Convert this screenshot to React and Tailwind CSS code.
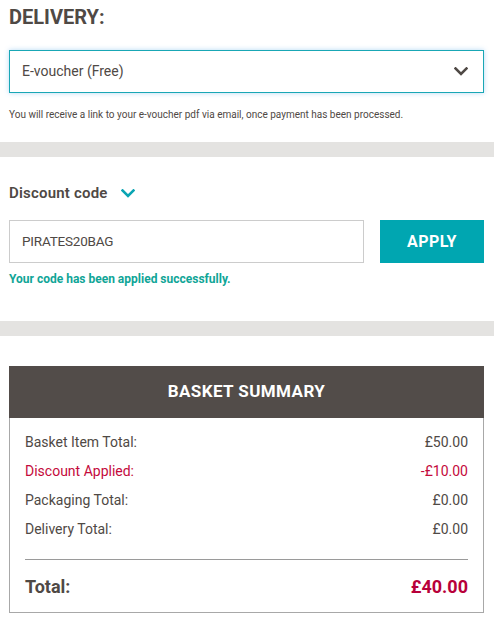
import React from "react";

const Chevron = ({ className, color }) => (
  <svg viewBox="0 0 14 9" className={className} fill="none">
    <polyline points="1.5,1.5 7,7 12.5,1.5" stroke={color} strokeWidth="2.6" strokeLinecap="square" />
  </svg>
);

const rows = [
  { label: "Basket Item Total:", value: "£50.00" },
  { label: "Discount Applied:", value: "-£10.00", red: true },
  { label: "Packaging Total:", value: "£0.00" },
  { label: "Delivery Total:", value: "£0.00" },
];

export default function App() {
  return (
    <div className="w-[494px] h-[621px] bg-white text-[#4f4945] font-['Roboto',sans-serif] overflow-hidden">
      {/* delivery */}
      <div className="h-[142px] pt-[5px] px-[9px]">
        <h2 className="text-[20px] leading-[24px] font-bold">DELIVERY:</h2>
        <div className="mt-[21px] h-[43px] w-[475px] border border-[#19a7b5] shadow-[0_0_5px_rgba(90,170,230,0.45)] flex items-center justify-between pl-[12px] pr-[15px]">
          <span className="text-[14px]">E-voucher (Free)</span>
          <Chevron className="w-[14px] h-[9px]" color="#4f4945" />
        </div>
        <p className="mt-[16px] text-[10px] leading-[12px]">
          You will receive a link to your e-voucher pdf via email, once payment has been processed.
        </p>
      </div>

      <div className="h-[15px] bg-[#e4e3e1]" />

      {/* discount */}
      <div className="h-[164px] pt-[26px] px-[9px]">
        <div className="flex items-center gap-[13px] h-[20px]">
          <span className="text-[15px] leading-[20px] font-semibold tracking-[0.2px]">Discount code</span>
          <Chevron className="w-[14px] h-[9px]" color="#0aa5b3" />
        </div>
        <div className="mt-[17px] flex gap-[16px] h-[43px]">
          <div className="w-[355px] border border-[#cccccc] flex items-center pl-[12px] text-[13.5px] tracking-[-0.2px]">
            PIRATES20BAG
          </div>
          <button className="w-[104px] bg-[#00a6b1] text-white font-bold text-[16px] tracking-wide">
            APPLY
          </button>
        </div>
        <p className="mt-[8px] text-[12px] leading-[16px] font-bold text-[#10a597]">
          Your code has been applied successfully.
        </p>
      </div>

      <div className="h-[15px] bg-[#e4e3e1]" />

      {/* summary */}
      <div className="pt-[30px] px-[9px]">
        <div className="w-[475px] h-[247px] border border-[#a8a8a8] flex flex-col">
          <div className="h-[52px] -mx-px -mt-px bg-[#524c49] flex items-center justify-center text-white font-bold text-[17px] tracking-wide">
            BASKET SUMMARY
          </div>
          <div className="px-[15px] pt-[10px]">
            {rows.map((r) => (
              <div
                key={r.label}
                className={`flex justify-between text-[14px] leading-[29px] ${r.red ? "text-[#c40a3c]" : ""}`}
              >
                <span>{r.label}</span>
                <span>{r.value}</span>
              </div>
            ))}
            <div className="mt-[15px] border-t border-[#9a9a9a]" />
            <div className="mt-[15px] flex justify-between items-center leading-[24px] font-bold text-[18px]">
              <span>Total:</span>
              <span className="text-[#b8003a]">£40.00</span>
            </div>
          </div>
        </div>
      </div>
    </div>
  );
}
